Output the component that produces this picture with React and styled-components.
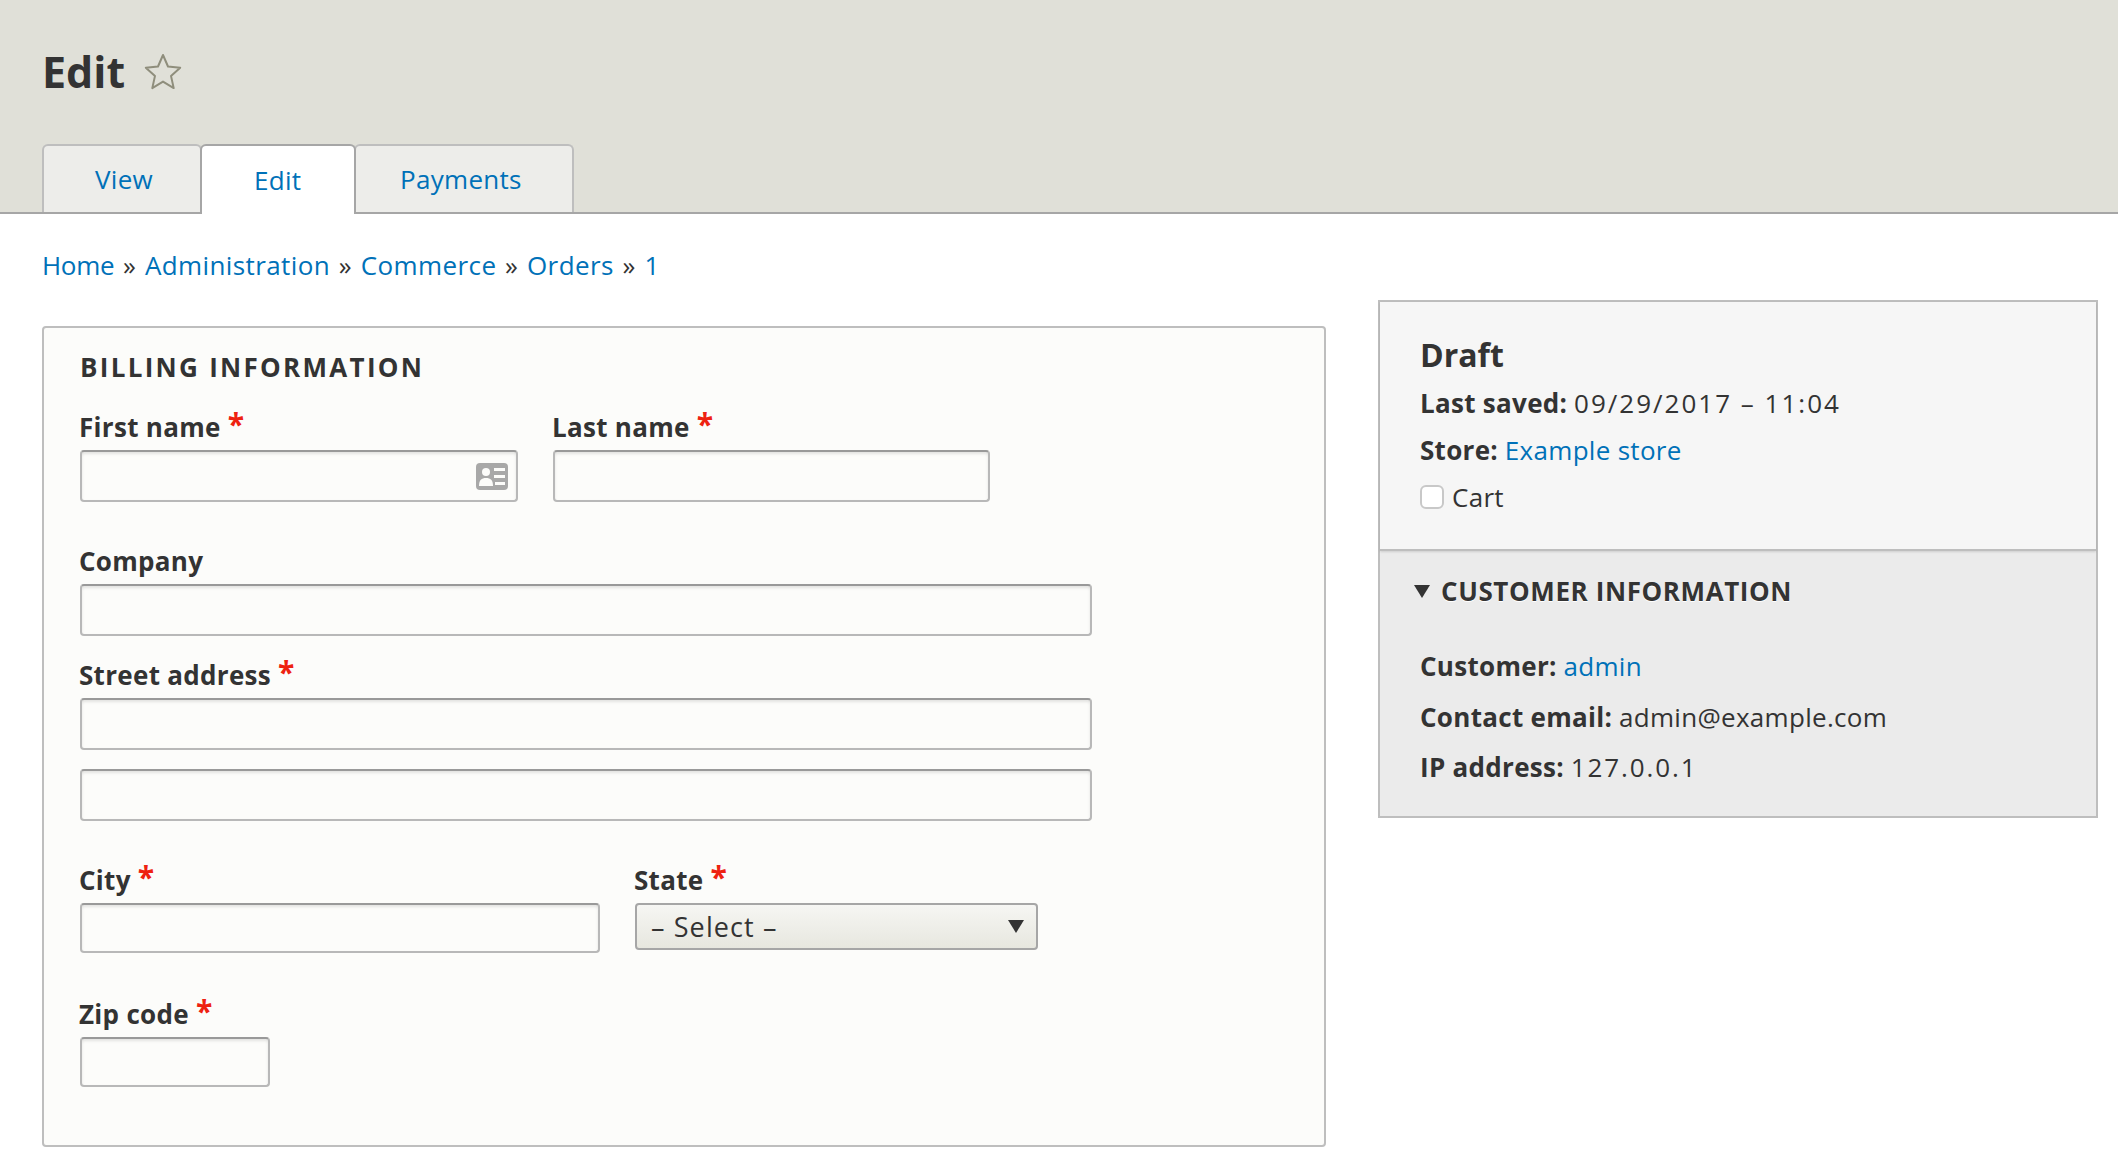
import styled, { createGlobalStyle } from 'styled-components';

const link = '#0071b8';
const text = '#333';
const line = '#bebebe';

const GlobalStyle = createGlobalStyle`
  html, body {
    margin: 0;
    background: #fff;
    font-family: "Open Sans", "Liberation Sans", sans-serif;
    color: ${text};
  }
  * { box-sizing: border-box; }
  a { color: ${link}; text-decoration: none; }
`;

const Header = styled.header`
  height: 214px;
  padding: 0 42px;
  background: #e0e0d8;
  border-bottom: 2px solid #a6a6a6;
`;

const TitleRow = styled.div`
  display: flex;
  align-items: center;
  gap: 19px;
  height: 144px;
`;

const Title = styled.h1`
  margin: 0;
  font-size: 43px;
  line-height: 54px;
  font-weight: 700;
  color: #333;
`;

const Tabs = styled.nav`
  display: flex;
  align-items: flex-start;
  height: 68px;
`;

const Tab = styled.a`
  width: ${(p) => p.$width}px;
  height: ${(p) => (p.$on ? 70 : 68)}px;
  margin-left: ${(p) => (p.$first ? 0 : -2)}px;
  padding: 0 0 0 ${(p) => p.$pad}px;
  display: flex;
  align-items: center;
  font-size: 26px;
  letter-spacing: 0.3px;
  border: 2px solid ${(p) => (p.$on ? '#a6a6a6' : line)};
  border-bottom: 0;
  border-radius: 6px 6px 0 0;
  background: ${(p) => (p.$on ? '#fff' : '#ededea')};
  position: relative;
  z-index: ${(p) => (p.$on ? 1 : 0)};
`;

const Crumbs = styled.div`
  height: 86px;
  padding: 33px 0 0 42px;
  font-size: 26px;
  line-height: 36px;
  letter-spacing: 0.4px;
  color: #333;

  a:first-child {
    letter-spacing: -0.3px;
  }
`;

const Sep = styled.span`
  margin: 0 1.5px;
`;

const Columns = styled.div`
  display: grid;
  grid-template-columns: 1284px 720px;
  column-gap: 52px;
  padding-left: 42px;
  align-items: start;
`;

const FormPanel = styled.section`
  height: 821px;
  margin-top: 26px;
  padding: 19px 36px 0;
  background: #fcfcfa;
  border: 2px solid ${line};
  border-radius: 4px;
`;

const PanelTitle = styled.h2`
  margin: 0 0 23px;
  font-size: 26px;
  line-height: 40px;
  font-weight: 700;
  letter-spacing: 2.3px;
  text-transform: uppercase;
`;

const Row = styled.div`
  display: flex;
  gap: ${(p) => p.$gap || 0}px;
  margin-top: ${(p) => p.$top || 0}px;
`;

const Field = styled.div`
  margin-top: ${(p) => p.$top || 0}px;
  width: ${(p) => p.$width}px;
`;

const Label = styled.label`
  display: block;
  height: 40px;
  margin-left: -1px;
  font-size: 26px;
  line-height: 35px;
  font-weight: 700;
  letter-spacing: 0.3px;
`;

const Star = styled.span`
  color: #ee2211;
  margin-left: 7px;
  font-size: 30px;
  line-height: 20px;
  font-weight: 700;
  vertical-align: 2px;
`;

const Input = styled.div`
  width: 100%;
  height: ${(p) => p.$height || 52}px;
  margin-top: ${(p) => p.$top || 0}px;
  background: #fcfcfa;
  border: 2px solid #b8b8b8;
  border-top-color: #999;
  border-radius: 4px;
  box-shadow: inset 0 2px 3px rgba(0, 0, 0, 0.1);
  display: flex;
  align-items: center;
  justify-content: flex-end;
  padding-right: 8px;
`;

const Select = styled.div`
  height: 47px;
  padding: 0 12px 0 14px;
  display: flex;
  align-items: center;
  justify-content: space-between;
  font-size: 27px;
  letter-spacing: 1.1px;
  border: 2px solid #a6a6a6;
  border-radius: 4px;
  background: linear-gradient(#f6f6f3, #e7e7df);
`;

const Arrow = styled.span`
  width: 0;
  height: 0;
  border-left: 8px solid transparent;
  border-right: 8px solid transparent;
  border-top: 13px solid ${text};
`;

const SidePanel = styled.aside`
  height: 518px;
  background: #ebebeb;
  border: 2px solid ${line};
`;

const Summary = styled.div`
  height: 249px;
  padding: 29px 40px 0;
  background: #f6f6f6;
  border-bottom: 2px solid ${line};
  box-shadow: 0 1px 2px rgba(0, 0, 0, 0.12);
  font-size: 26px;
`;

const Draft = styled.h3`
  margin: 0 0 1px;
  font-size: 32px;
  line-height: 48px;
  font-weight: 700;
`;

const Line = styled.div`
  line-height: ${(p) => p.$height || 47}px;
  font-size: 26px;
`;

const Strong = styled.b`
  font-weight: 700;
  letter-spacing: 0.3px;
`;

const Value = styled.span`
  letter-spacing: ${(p) => p.$spacing || 0.3}px;
`;

const CheckRow = styled.div`
  display: flex;
  align-items: center;
  gap: 8px;
  height: 46px;
`;

const Check = styled.span`
  width: 24px;
  height: 24px;
  background: #fff;
  border: 2px solid #c8c8c8;
  border-radius: 6px;
`;

const Details = styled.div`
  padding: 0 40px;
`;

const DetailHead = styled.div`
  display: flex;
  align-items: center;
  gap: 11px;
  height: 46px;
  margin: 17px 0 27px -6px;
  font-size: 26px;
  font-weight: 700;
  letter-spacing: 0.6px;
  text-transform: uppercase;
  text-shadow: 0 1px 0 #fff;
`;

const StarIcon = () => (
  <svg width="38" height="38" viewBox="0 0 38 38">
    <path
      d="M19 2l5 11.5 12.2 1.2-9.2 8.2 2.7 12.2L19 28.6l-10.7 6.5L11 22.9l-9.2-8.2L14 13.5z"
      fill="none"
      stroke="#8f8e7c"
      strokeWidth="2"
      strokeLinejoin="round"
    />
  </svg>
);

const ContactIcon = () => (
  <svg width="32" height="27" viewBox="0 0 32 27">
    <rect width="32" height="27" rx="4" fill="#a8a8a8" />
    <circle cx="10" cy="9" r="4" fill="#fcfcfa" />
    <path d="M3 23c0-6 2.5-8 7-8s7 2 7 8z" fill="#fcfcfa" />
    <path d="M18 5h11v3H18zM18 12h11v3H18zM19 19h10v3H19z" fill="#fcfcfa" />
  </svg>
);

const Required = () => <Star>*</Star>;

const App = () => (
  <>
    <GlobalStyle />
    <Header>
      <TitleRow>
        <Title>Edit</Title>
        <StarIcon />
      </TitleRow>
      <Tabs>
        <Tab href="#" $first $width={160} $pad={51}>View</Tab>
        <Tab href="#" $on $width={156} $pad={52}>Edit</Tab>
        <Tab href="#" $width={220} $pad={44}>Payments</Tab>
      </Tabs>
    </Header>
    <Crumbs>
      <a href="#">Home</a> <Sep>»</Sep> <a href="#">Administration</a> <Sep>»</Sep>{' '}
      <a href="#">Commerce</a> <Sep>»</Sep> <a href="#">Orders</a> <Sep>»</Sep> <a href="#">1</a>
    </Crumbs>
    <Columns>
      <FormPanel>
        <PanelTitle>Billing information</PanelTitle>
        <Row $gap={35}>
          <Field $width={438}>
            <Label>First name<Required /></Label>
            <Input><ContactIcon /></Input>
          </Field>
          <Field $width={437}>
            <Label>Last name<Required /></Label>
            <Input />
          </Field>
        </Row>
        <Field $top={42} $width={1012}>
          <Label>Company</Label>
          <Input />
        </Field>
        <Field $top={22} $width={1012}>
          <Label>Street address<Required /></Label>
          <Input />
          <Input $top={19} />
        </Field>
        <Row $top={42} $gap={35}>
          <Field $width={520}>
            <Label>City<Required /></Label>
            <Input $height={50} />
          </Field>
          <Field $width={403}>
            <Label>State<Required /></Label>
            <Select>– Select –<Arrow /></Select>
          </Field>
        </Row>
        <Field $top={44} $width={190}>
          <Label>Zip code<Required /></Label>
          <Input $height={50} />
        </Field>
      </FormPanel>
      <SidePanel>
        <Summary>
          <Draft>Draft</Draft>
          <Line><Strong>Last saved:</Strong> <Value $spacing={2}>09/29/2017 – 11:04</Value></Line>
          <Line><Strong>Store:</Strong> <Value><a href="#">Example store</a></Value></Line>
          <CheckRow><Check /><Value>Cart</Value></CheckRow>
        </Summary>
        <Details>
          <DetailHead><Arrow />Customer information</DetailHead>
          <Line $height={50.5}><Strong>Customer:</Strong> <Value><a href="#">admin</a></Value></Line>
          <Line $height={50.5}><Strong>Contact email:</Strong> <Value>admin@example.com</Value></Line>
          <Line $height={50.5}><Strong>IP address:</Strong> <Value $spacing={1.9}>127.0.0.1</Value></Line>
        </Details>
      </SidePanel>
    </Columns>
  </>
);

export default App;
